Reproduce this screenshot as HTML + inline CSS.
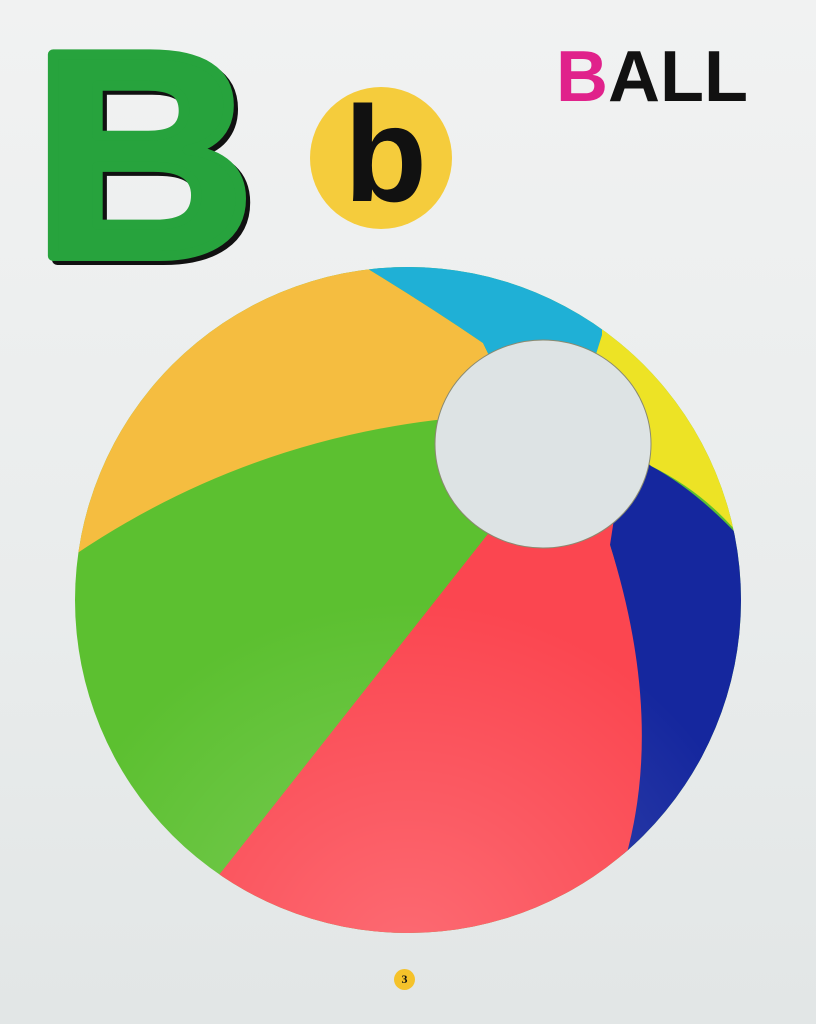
<!DOCTYPE html>
<html><head><meta charset="utf-8"><style>
html,body{margin:0;padding:0}
body{width:816px;height:1024px;overflow:hidden;background:#eceeee;position:relative;font-family:"Liberation Sans",sans-serif}
.bg{position:absolute;inset:0;background:linear-gradient(180deg,#f1f2f2 0%,#e9ecec 60%,#e2e6e6 100%)}
.circ{position:absolute;left:310px;top:87px;width:142px;height:142px;border-radius:50%;background:#f5cc3c}
.b{position:absolute;left:344px;top:86px;font-size:136px;font-weight:bold;color:#111;line-height:1}
.ball{position:absolute;left:556px;top:41px;font-size:72px;font-weight:bold;color:#111;line-height:1}
.ball span{color:#e0228b}
.pg{position:absolute;left:394px;top:969px;width:21px;height:21px;border-radius:50%;background:#f5c22a;font:bold 12px "Liberation Serif",serif;text-align:center;line-height:21px;color:#111}
svg{position:absolute;left:0;top:0}
</style></head><body>
<div class="bg"></div>
<svg width="816" height="1024">
<g transform="scale(1.05 1)">
<text x="35" y="260" font-family="Liberation Sans" font-weight="bold" font-size="293" fill="#111" stroke="#111" stroke-width="10" stroke-linejoin="round">B</text>
<text x="31" y="256" font-family="Liberation Sans" font-weight="bold" font-size="293" fill="#27a33d" stroke="#27a33d" stroke-width="10" stroke-linejoin="round">B</text>
</g>
</svg>
<div class="circ"></div>
<div class="b">b</div>
<div class="ball"><span>B</span>ALL</div>
<svg width="816" height="1024">
<defs>
<clipPath id="c"><circle cx="408" cy="600" r="333"/></clipPath>
<radialGradient id="sh" cx="0.5" cy="0.95" r="0.45">
<stop offset="0" stop-color="#fff" stop-opacity="0.2"/><stop offset="1" stop-color="#fff" stop-opacity="0"/></radialGradient>
</defs>
<g clip-path="url(#c)">
<rect x="0" y="200" width="816" height="800" fill="#5cc030"/>
<path d="M60,565 Q230,445 436,420 L520,420 L483,343 Q420,300 345,255 L60,255Z" fill="#f5bd40"/>
<path d="M345,255 Q420,300 483,343 L520,420 L600,420 L592,367 L602,335 L605,255Z" fill="#1fb0d6"/>
<path d="M602,255 L602,335 L592,367 L600,420 L651,466 Q700,490 735,530 L780,530 L780,255Z" fill="#ede325"/>
<path d="M600,420 L651,466 Q705,495 760,560 L760,950 L600,950 Q665,720 610,545 Z" fill="#15279e"/>
<path d="M495,525 L540,470 L620,480 L610,545 Q665,720 625,860 L600,960 L400,960 L215,880 Z" fill="#fb4650"/>
<rect x="0" y="200" width="816" height="800" fill="url(#sh)"/>
</g>
<ellipse cx="543" cy="444" rx="108" ry="104" fill="#dde3e4" stroke="#8a8a70" stroke-width="1"/>
</svg>
<div class="pg">3</div>
</body></html>
